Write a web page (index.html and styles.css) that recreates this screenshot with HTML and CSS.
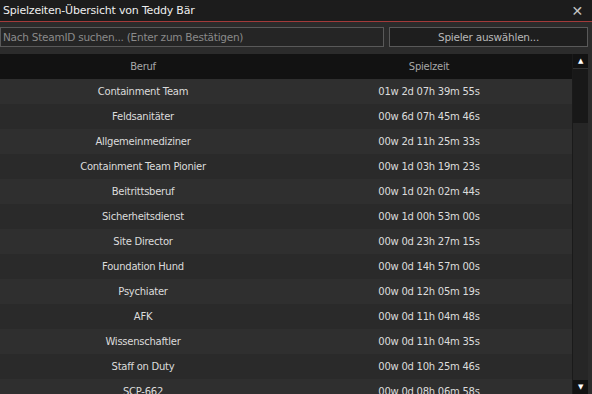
FILE: index.html
```html
<!DOCTYPE html>
<html lang="de">
<head>
    <meta charset="UTF-8">
    <title>Spielzeiten-Übersicht</title>
    <link rel="stylesheet" href="styles.css">
</head>
<body>
    <div class="window">
        <div class="titlebar">
            <span class="title">Spielzeiten-Übersicht von Teddy Bär</span>
            <span class="close">&#x2715;</span>
        </div>

        <div class="toolbar">
            <div class="search">Nach SteamID suchen... (Enter zum Bestätigen)</div>
            <div class="select-btn">Spieler auswählen...</div>
        </div>

        <div class="list-wrap">
            <div class="list">
                <div class="row head"><div>Beruf</div><div>Spielzeit</div></div>
                <div class="row"><div>Containment Team</div><div>01w 2d 07h 39m 55s</div></div>
                <div class="row"><div>Feldsanitäter</div><div>00w 6d 07h 45m 46s</div></div>
                <div class="row"><div>Allgemeinmediziner</div><div>00w 2d 11h 25m 33s</div></div>
                <div class="row"><div>Containment Team Pionier</div><div>00w 1d 03h 19m 23s</div></div>
                <div class="row"><div>Beitrittsberuf</div><div>00w 1d 02h 02m 44s</div></div>
                <div class="row"><div>Sicherheitsdienst</div><div>00w 1d 00h 53m 00s</div></div>
                <div class="row"><div>Site Director</div><div>00w 0d 23h 27m 15s</div></div>
                <div class="row"><div>Foundation Hund</div><div>00w 0d 14h 57m 00s</div></div>
                <div class="row"><div>Psychiater</div><div>00w 0d 12h 05m 19s</div></div>
                <div class="row"><div>AFK</div><div>00w 0d 11h 04m 48s</div></div>
                <div class="row"><div>Wissenschaftler</div><div>00w 0d 11h 04m 35s</div></div>
                <div class="row"><div>Staff on Duty</div><div>00w 0d 10h 25m 46s</div></div>
                <div class="row"><div>SCP-662</div><div>00w 0d 08h 06m 58s</div></div>
            </div>

            <div class="scrollbar">
                <div class="sb-btn">&#9650;</div>
                <div class="sb-thumb"></div>
                <div class="sb-track"></div>
                <div class="sb-btn">&#9660;</div>
            </div>
        </div>
    </div>
</body>
</html>
```

FILE: styles.css
```css
body {
    margin: 0;
    width: 592px;
    height: 394px;
    overflow: hidden;
    background-color: #2b2b2b;
    font-family: "DejaVu Sans", Verdana, sans-serif;
    font-size: 10px;
    letter-spacing: -0.25px;
}

.window {
    display: flex;
    flex-direction: column;
    height: 394px;
}

.titlebar {
    display: flex;
    align-items: center;
    justify-content: space-between;
    height: 21px;
    padding: 0 9px 0 3px;
    background-color: #1c1c1c;
    border-bottom: 1px solid #a33a3a;
    color: #eeeeee;
    font-size: 11px;
    letter-spacing: -0.2px;
}

.close {
    color: #c4c4c4;
    font-size: 14px;
    font-weight: bold;
}

.toolbar {
    display: flex;
    gap: 5px;
    padding: 5px 4px 5px 0;
}

.search,
.select-btn {
    height: 18px;
    line-height: 18px;
    border: 1px solid #595959;
    color: #8a8a8a;
    font-size: 10.5px;
}

.search {
    box-sizing: border-box;
    width: 384px;
    height: 20px;
    padding-left: 2px;
    background-color: #252525;
}

.select-btn {
    flex: 1;
    text-align: center;
    background-color: #1e1e1e;
    color: #b8b8b8;
}

.list-wrap {
    display: flex;
    flex: 1;
    min-height: 0;
    overflow: hidden;
    margin-top: 2px;
}

.list {
    flex: 1;
    overflow: hidden;
}

.row {
    display: grid;
    grid-template-columns: 1fr 1fr;
    height: 25px;
    align-items: center;
    text-align: center;
    color: #dcdcdc;
    background-color: #2a2a2a;
}

.row:nth-child(even) {
    background-color: #2f2f2f;
}

.row.head {
    background-color: #121212;
    color: #a8a8a8;
}

.scrollbar {
    display: flex;
    flex-direction: column;
    width: 15px;
    margin-right: 4px;
    background-color: #262626;
    border-left: 1px solid #1a1a1a;
}

.sb-btn {
    height: 14px;
    background-color: #121212;
    color: #ffffff;
    font-size: 7px;
    line-height: 14px;
    text-align: center;
}

.sb-thumb {
    height: 54px;
    background-color: #181818;
    border-top: 1px solid #333333;
}

.sb-track {
    flex: 1;
}
```
